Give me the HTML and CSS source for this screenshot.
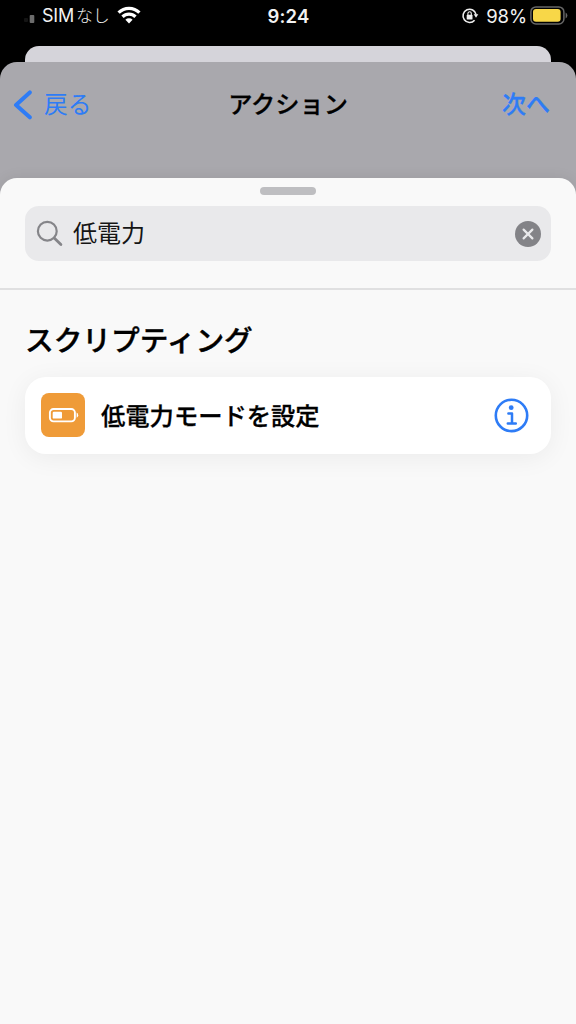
FILE: index.html
```html
<!DOCTYPE html>
<html lang="ja">
<head>
<meta charset="utf-8">
<title>アクション</title>
<link rel="stylesheet" href="styles.css">
</head>
<body>
<div class="phone">
  <header class="status">
    <div class="status-left">
      <svg class="signal" width="14" height="16" viewBox="0 0 14 16"><rect x="1" y="10" width="4" height="4" rx="1" fill="#141414"/><rect x="6.7" y="7" width="4.6" height="8" rx="1" fill="#6c6c6c"/></svg>
      <span class="carrier">SIM<span class="carrier-kana">なし</span></span>
      <svg class="wifi" width="24" height="18" viewBox="0 0 24 18" fill="none" stroke="#fff" stroke-width="3.3"><path d="M1.6 6.7a14.8 14.8 0 0 1 20.8 0"/><path d="M5.5 10.8a9.3 9.3 0 0 1 13 0"/><path d="M12 17.4l-3.6-3.7a5.2 5.2 0 0 1 7.2 0z" fill="#fff" stroke="none"/></svg>
    </div>
    <span class="clock">9:24</span>
    <div class="status-right">
      <svg class="lock" width="18" height="18" viewBox="0 0 18 18" fill="none" stroke="#eee" stroke-width="1.6"><path d="M13.6 13.2a6.6 6.6 0 1 1 1.5-5.6"/><path d="M12.7 7.3h4.6L15 10.7z" fill="#eee" stroke="none"/><rect x="5.7" y="7.8" width="5.8" height="4.8" rx=".7" fill="#eee" stroke="none"/><path d="M6.9 8V6.5a1.7 1.7 0 0 1 3.4 0V8" stroke-width="1.1"/></svg>
      <span class="percent">98%</span>
      <svg class="battery" width="38" height="19" viewBox="0 0 38 19"><rect x=".9" y=".9" width="33" height="17" rx="5" fill="none" stroke="#666" stroke-width="1.5"/><rect x="3" y="3" width="27.6" height="12.8" rx="3" fill="#f8d748"/><path d="M35.6 6.6q1.8 1 1.8 2.9t-1.8 2.9z" fill="#666"/></svg>
    </div>
  </header>
  <div class="back-card"></div>
  <main class="sheet">
    <nav class="nav">
      <a class="back"><svg width="20" height="30" viewBox="0 0 20 30" fill="none" stroke="#2e7cf6" stroke-width="4" stroke-linecap="round" stroke-linejoin="round"><path d="M16.8 2.4L3 15l13.8 12.3"/></svg><span>戻る</span></a>
      <h1 class="title">アクション</h1>
      <a class="next">次へ</a>
    </nav>
    <section class="panel">
      <div class="grabber"></div>
      <div class="search">
        <svg width="28" height="28" viewBox="0 0 28 28" fill="none" stroke="#858589" stroke-width="2.2" stroke-linecap="round"><circle cx="11.3" cy="11.2" r="9.4"/><path d="M18.2 18.1l6.7 6.5" stroke-width="2.8"/></svg>
        <span class="query">低電力</span>
        <svg class="clear" width="26" height="26" viewBox="0 0 26 26"><circle cx="13" cy="13" r="13" fill="#838387"/><path d="M8.6 8.6l8.8 8.8M17.4 8.6l-8.8 8.8" stroke="#e9e9eb" stroke-width="2.2" stroke-linecap="round"/></svg>
      </div>
      <div class="results">
        <h2 class="group">スクリプティング</h2>
        <div class="action">
          <span class="action-icon"><svg width="32" height="18" viewBox="0 0 32 18"><rect x="2.9" y="3" width="25" height="12.4" rx="3.6" fill="none" stroke="#fff" stroke-width="1.9"/><rect x="5.7" y="5.8" width="9.3" height="6.8" rx="1.2" fill="#fff"/><path d="M29.6 6.6q1.6.8 1.6 2.6t-1.6 2.6z" fill="#fff"/></svg></span>
          <span class="action-name">低電力モードを設定</span>
          <svg class="info" width="36" height="36" viewBox="0 0 36 36" fill="none" stroke="#2e7cf6"><circle cx="18.5" cy="17.4" r="15.7" stroke-width="2.6"/><circle cx="18.2" cy="9.7" r="2.4" fill="#2e7cf6" stroke="none"/><path d="M15.4 15.5h3.6v9.8M14.8 25.6h8" stroke-width="2.5" stroke-linecap="round" stroke-linejoin="round"/></svg>
        </div>
      </div>
    </section>
  </main>
</div>
</body>
</html>
```
FILE: styles.css
```css
* { box-sizing: border-box; }
body { margin: 0; background: #000; }
.phone {
  width: 576px;
  height: 1024px;
  display: flex;
  flex-direction: column;
  overflow: hidden;
  background: #000;
  color: #000;
  font-family: Inter, "Noto Sans CJK JP", sans-serif;
}
.status {
  height: 46px;
  padding: 0 8px 15px 23px;
  display: grid;
  grid-template-columns: 1fr auto 1fr;
  align-items: center;
  color: #f2f2f2;
  font-size: 18px;
  line-height: 24px;
}
.status-left, .status-right { display: flex; align-items: center; }
.status-right { justify-content: flex-end; }
.signal { margin: 0 5px 0 0; }
.carrier { display: flex; font-size: 18px; letter-spacing: -0.2px; }
.carrier-kana { margin-left: 2px; font-size: 17px; font-weight: 300; }
.wifi { margin: -2px 0 0 7px; }
.clock { font-size: 18.5px; font-weight: 600; letter-spacing: 0.2px; margin-right: 14px; }
.lock { margin-top: 1px; }
.percent { margin: 0 3px 0 7px; font-size: 18.5px; letter-spacing: -0.1px; }
.back-card {
  height: 16px;
  margin: 0 25px;
  border-radius: 14px 14px 0 0;
  background: #d5d4da;
}
.sheet {
  flex: 1;
  display: flex;
  flex-direction: column;
  border-radius: 17px 17px 0 0;
  background: #a9a8ad;
}
.nav {
  height: 116px;
  padding: 2px 26px 32px 13px;
  display: grid;
  grid-template-columns: 1fr auto 1fr;
  align-items: center;
  font-size: 24px;
  line-height: 36px;
}
.back, .next { color: #2e7cf6; }
.back { display: flex; align-items: center; gap: 11px; font-size: 23.7px; }
.next { justify-self: end; font-weight: 500; -webkit-text-stroke: 0.3px; }
.title { margin: 0 -13px 0 0; font-size: 24.2px; font-weight: 500; -webkit-text-stroke: 0.3px; }
.panel {
  flex: 1;
  padding-top: 9px;
  border-radius: 17px 17px 0 0;
  background: #f9f9f9;
  box-shadow: 0 0 14px rgba(0, 0, 0, 0.08);
}
.grabber { width: 56px; height: 8px; margin: 0 auto 11px; border-radius: 4px; background: #bebec1; }
.search {
  height: 55px;
  margin: 0 25px 27px;
  padding: 0 10px 0 11px;
  display: flex;
  align-items: center;
  border-radius: 14px;
  background: #e9e9eb;
}
.query { flex: 1; margin: 1px 0 0 9px; font-size: 24px; line-height: 36px; color: #151515; }
.results { padding: 31px 25px 0; border-top: 2px solid #e0e0e1; }
.group { margin: 0 0 16px; font-size: 28.7px; line-height: 40px; font-weight: 500; -webkit-text-stroke: 0.4px; }
.action {
  height: 77px;
  padding: 0 22px 0 16px;
  display: flex;
  align-items: center;
  border-radius: 21px;
  background: #fff;
  box-shadow: 0 4px 26px rgba(0, 0, 0, 0.06);
}
.action-icon {
  width: 44px;
  height: 44px;
  display: flex;
  align-items: center;
  justify-content: center;
  margin-top: -1px;
  border-radius: 8px;
  background: #ef9b38;
}
.action-name { flex: 1; margin-left: 16px; font-size: 24.3px; line-height: 36px; font-weight: 500; -webkit-text-stroke: 0.3px; }
```
